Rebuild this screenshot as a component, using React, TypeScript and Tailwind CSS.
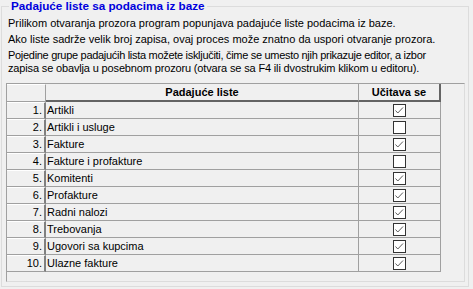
import React from "react";

const rows: { name: string; on: boolean }[] = [
  { name: "Artikli", on: true },
  { name: "Artikli i usluge", on: false },
  { name: "Fakture", on: true },
  { name: "Fakture i profakture", on: false },
  { name: "Komitenti", on: true },
  { name: "Profakture", on: true },
  { name: "Radni nalozi", on: true },
  { name: "Trebovanja", on: true },
  { name: "Ugovori sa kupcima", on: true },
  { name: "Ulazne fakture", on: true },
];

function Check({ on }: { on: boolean }) {
  return (
    <div className="w-[13px] h-[13px] border border-[#333333] bg-white flex items-center justify-center">
      {on && (
        <svg width="11" height="11" viewBox="0 0 11 11">
          <polyline points="1.5,5.5 3.8,8 9,2.5" fill="none" stroke="#5a5a5a" strokeWidth="1" />
        </svg>
      )}
    </div>
  );
}

export default function App() {
  return (
    <div className="w-[473px] h-[289px] bg-[#f0f0f0] pt-[6px] pl-[1px] font-['Liberation_Sans',Arial,sans-serif] text-[11px] text-black overflow-hidden">
      <div className="relative w-[468px] h-[281px] border border-[#dcdcdc] pl-[4px]">
        <div className="absolute -top-[8px] left-[7px] px-[2px] bg-[#f0f0f0] font-bold text-[11.7px] leading-[14px] text-[#0000dd]">
          Padajuće liste sa podacima iz baze
        </div>

        <div className="pl-[2px] pt-[10px] leading-[13px]">
          <p>Prilikom otvaranja prozora program popunjava padajuće liste podacima iz baze.</p>
          <p className="mt-[3px]">Ako liste sadrže velik broj zapisa, ovaj proces može znatno da uspori otvaranje prozora.</p>
          <p className="mt-[3px] whitespace-nowrap">
            <span className="block tracking-[-0.3px]">
              Pojedine grupe padajućih lista možete isključiti, čime se umesto njih prikazuje editor, a izbor
            </span>
            <span className="block tracking-[-0.15px]">
              zapisa se obavlja u posebnom prozoru (otvara se sa F4 ili dvostrukim klikom u editoru).
            </span>
          </p>
        </div>

        <div className="mt-[8px] w-[459px] h-[199px] border border-t-[#a0a0a0] border-l-[#a0a0a0] border-r-[#dcdcdc] border-b-[#dcdcdc] bg-[#f0f0f0]">
          <div className="flex h-[18px]">
            <div className="w-[39px] border-r border-b border-[#a0a0a0] border-t border-t-white" />
            <div className="w-[313px] flex items-center justify-center font-bold border-r border-r-[#a0a0a0] border-b-2 border-b-[#646464]">
              Padajuće liste
            </div>
            <div className="w-[82px] flex items-center justify-center font-bold border-r-2 border-r-[#646464] border-b-2 border-b-[#646464]">
              Učitava se
            </div>
          </div>
          {rows.map((r, i) => (
            <div key={r.name} className="flex h-[17px]">
              <div className="w-[39px] flex items-center justify-end pr-[2px] border-r-2 border-r-[#808080] border-b border-b-[#a0a0a0] border-t border-t-white">
                {i + 1}.
              </div>
              <div className="w-[313px] flex items-center pl-[1px] border-r border-b border-[#a0a0a0]">{r.name}</div>
              <div className="w-[82px] flex items-center justify-center border-r border-b border-[#a0a0a0]">
                <Check on={r.on} />
              </div>
            </div>
          ))}
        </div>
      </div>
    </div>
  );
}
